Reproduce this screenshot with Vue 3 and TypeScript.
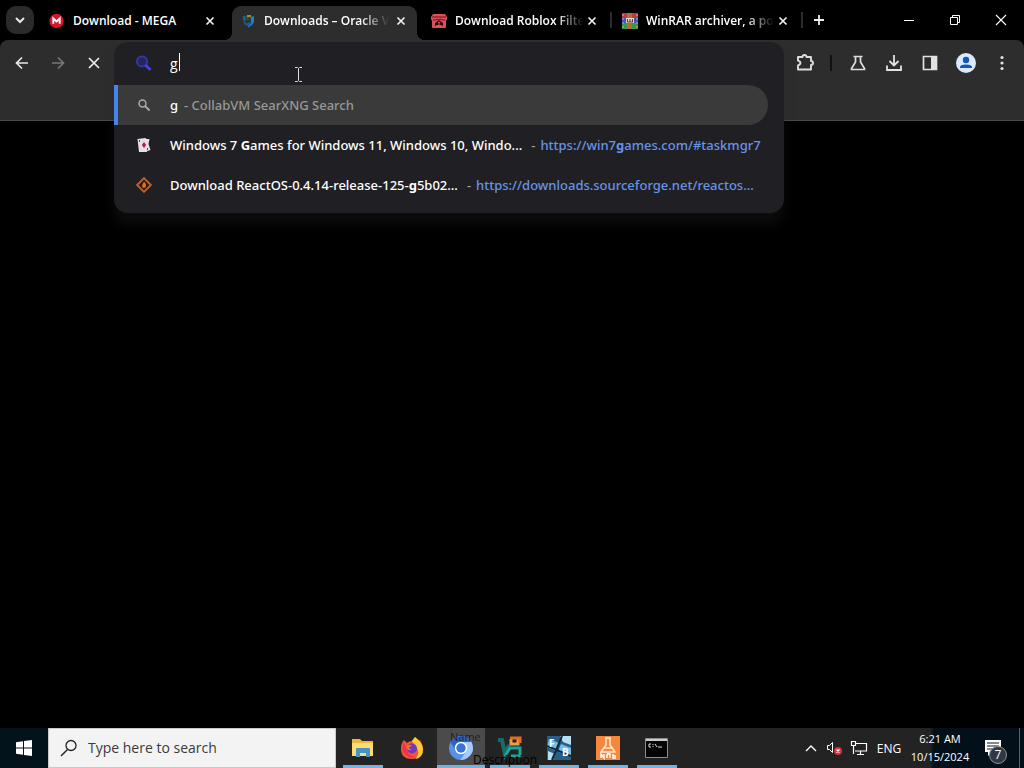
<script setup lang="ts">
import { ref } from 'vue'

interface Tab { id: string; title: string; active?: boolean }
interface Part { text: string; bold?: boolean }
interface Suggestion { icon: string; title: Part[]; url: Part[] }

const query = ref('g')
const search = ref('')

const tabs: Tab[] = [
  { id: 'mega', title: 'Download - MEGA' },
  { id: 'oracle', title: 'Downloads – Oracle V', active: true },
  { id: 'itch', title: 'Download Roblox Filte' },
  { id: 'winrar', title: 'WinRAR archiver, a po' }
]

const suggestions: Suggestion[] = [
  {
    icon: 'card',
    title: [{ text: 'Windows 7 ' }, { text: 'G', bold: true }, { text: 'ames for Windows 11, Windows 10, Windo...' }],
    url: [{ text: 'https://win7' }, { text: 'g', bold: true }, { text: 'ames.com/#taskmgr7' }]
  },
  {
    icon: 'forge',
    title: [{ text: 'Download ReactOS-0.4.14-release-125-' }, { text: 'g', bold: true }, { text: '5b02...' }],
    url: [{ text: 'https://downloads.sourceforge.net/reactos...' }]
  }
]

const apps = [
  { id: 'files', label: 'File Explorer', state: 'open' },
  { id: 'firefox', label: 'Firefox', state: '' },
  { id: 'chromium', label: 'Chromium', state: 'active' },
  { id: 'vb', label: 'VirtualBox', state: 'open' },
  { id: 'fb', label: 'Boot tool', state: 'open' },
  { id: 'lab', label: 'Lab', state: 'open' },
  { id: 'cmd', label: 'Command Prompt', state: 'open' }
]
</script>

<template>
  <div class="desktop">
    <header class="strip">
      <button class="tab-search" aria-label="Search tabs">
        <svg width="10" height="8" viewBox="0 0 10 8"><path d="M1 2l4 4 4-4" fill="none" stroke="#e8e8e8" stroke-width="2" /></svg>
      </button>
      <nav class="tabs">
        <div v-for="tab in tabs" :key="tab.id" class="tab" :class="[tab.id, { active: tab.active }]">
          <button class="tab-main">
            <svg v-if="tab.id === 'mega'" width="16" height="16" viewBox="0 0 16 16">
              <circle cx="7.500" cy="8" r="7.200" fill="#d9142a" />
              <path d="M4.300 10.800V5.500L7.500 8.500l3.200-3v5.300" fill="none" stroke="#fff" stroke-width="1.900" />
            </svg>
            <svg v-else-if="tab.id === 'oracle'" width="16" height="16" viewBox="0 0 16 16">
              <path d="M2.500 3.500l3-1v6l-2-1z" fill="#176c8c" />
              <path d="M6 3l3 1v4L6 7z" fill="#394b3d" />
              <path d="M7 2h4v2H7z" fill="#b18a2c" />
              <path d="M10.500 4l3.500-1v6l-2 3-4 2.500V13l3-3z" fill="#1684d1" />
              <path d="M3 8l4 2 3-1v3l-3 1-3-2z" fill="#1d5596" />
            </svg>
            <svg v-else-if="tab.id === 'itch'" width="16" height="16" viewBox="0 0 16 16">
              <path d="M2 1h12l2 3v2l-1 2v6q0 1-1 1H2q-1 0-1-1V8L0 6V4z" fill="#d9505a" />
              <path d="M1 4h14M2 7h3l1-1 2 1 2-1 1 1h3" stroke="#68141c" fill="none" />
              <path d="M4 13V10l4-3 4 3v3l-2-1H6z" fill="#35080c" />
              <path d="M8 8.500l1.500 1.500H8.500v2h-1v-2h-1z" fill="#d9505a" />
            </svg>
            <svg v-else width="16" height="16" viewBox="0 0 16 16">
              <path d="M0 0h16v5H0z" fill="#b73f43" />
              <path d="M0 5h16v5H0z" fill="#3b56bc" />
              <path d="M0 10h16v6H0z" fill="#35984b" />
              <path d="M1 1v14M15 1v14" stroke="#d9a0b4" stroke-dasharray="2 2" />
              <path d="M5 0h5v16H5z" fill="#ba6a35" />
              <path d="M4 5h8v5H4z" fill="#e8e3d0" />
              <path d="M5.500 6v3h5V6M8 6v3" stroke="#574626" fill="none" stroke-width="1.200" />
            </svg>
            <span class="tab-title">{{ tab.title }}</span>
          </button>
          <button class="tab-close" aria-label="Close tab">
            <svg width="10" height="10" viewBox="0 0 10 10"><path d="M1.500 1.500l7 7M8.500 1.500l-7 7" stroke="#f0f0f0" stroke-width="1.700" /></svg>
          </button>
        </div>
      </nav>
      <button class="new-tab" aria-label="New tab">
        <svg width="12" height="12" viewBox="0 0 12 12"><path d="M6 1v10M1 6h10" stroke="#eee" stroke-width="1.800" /></svg>
      </button>
      <div class="window-controls">
        <button aria-label="Minimize"><svg width="12" height="12" viewBox="0 0 12 12"><path d="M1 6.500h10" stroke="#fff" /></svg></button>
        <button aria-label="Restore"><svg width="12" height="12" viewBox="0 0 12 12"><path d="M1.500 3.500h7v7h-7zM3.500 3.500v-2h7v7h-2" fill="none" stroke="#fff" /></svg></button>
        <button aria-label="Close"><svg width="12" height="12" viewBox="0 0 12 12"><path d="M1 1l10 10M11 1L1 11" stroke="#fff" stroke-width="1.100" /></svg></button>
      </div>
    </header>

    <section class="toolbar">
      <button class="tool" aria-label="Back"><svg width="16" height="16" viewBox="0 0 16 16"><path d="M14 8H3M8 2.500L2.500 8 8 13.500" fill="none" stroke="#e8e8e8" stroke-width="1.700" /></svg></button>
      <button class="tool" aria-label="Forward"><svg width="16" height="16" viewBox="0 0 16 16"><path d="M2 8h11M8 2.500L13.500 8 8 13.500" fill="none" stroke="#777" stroke-width="1.700" /></svg></button>
      <button class="tool" aria-label="Stop"><svg width="16" height="16" viewBox="0 0 16 16"><path d="M3 3l10 10M13 3L3 13" stroke="#eee" stroke-width="1.700" /></svg></button>

      <div class="omnibox">
        <div class="popup">
          <label class="address">
            <svg class="lens" width="18" height="18" viewBox="0 0 18 18"><circle cx="8" cy="6.500" r="5" fill="#252653" stroke="#3434b0" stroke-width="2" /><path d="M11.500 10l5 5" stroke="#4040dc" stroke-width="3" /></svg>
            <input v-model="query" type="text" aria-label="Address and search bar" spellcheck="false" />
            <span class="caret"></span>
          </label>
          <ul class="results">
            <li class="selected">
              <svg class="lens" width="14" height="14" viewBox="0 0 14 14"><circle cx="5.500" cy="5.500" r="3.500" fill="none" stroke="#aaa" stroke-width="1.500" /><path d="M8 8l4.500 4.500" stroke="#aaa" stroke-width="1.800" /></svg>
              <span class="name">g</span>
              <span class="engine">- CollabVM SearXNG Search</span>
            </li>
            <li v-for="s in suggestions" :key="s.icon">
              <svg v-if="s.icon === 'card'" class="lens" width="16" height="16" viewBox="0 0 16 16">
                <path d="M1.500 2l8-1 1 1h3l-1 5 2 6-3 1-1 1H3z" fill="#e8dfe4" />
                <path d="M8 5l2.200 3L8 11 5.800 8z" fill="#b31d4e" />
                <path d="M3 3h1v2H3zM11 11h1v2h-1z" fill="#6b3350" />
              </svg>
              <svg v-else class="lens" width="16" height="16" viewBox="0 0 16 16">
                <path d="M8 1.200L14.800 8 8 14.800 1.200 8z" fill="#33180b" stroke="#b8632a" stroke-width="1.900" />
                <path d="M8 4.500q2.500 2.500 2 4.500-.5 2-2 2t-2-2q0-1 2-4.500z" fill="#d9732b" />
              </svg>
              <span class="name"><span v-for="(p, i) in s.title" :key="i" :class="{ bold: p.bold }">{{ p.text }}</span></span>
              <span class="dash">-</span>
              <a class="url" href="#"><span v-for="(p, i) in s.url" :key="i" :class="{ bold: p.bold }">{{ p.text }}</span></a>
            </li>
          </ul>
        </div>
      </div>

      <button class="tool" aria-label="Extensions"><svg width="20" height="20" viewBox="0 0 20 20"><path d="M3 4h4.500q0-2 2-2t2 2H16v4q2 0 2 2t-2 2v4.500H3v-4.200q2.400-.6 2.400-2.300T3 7.700z" fill="none" stroke="#ddd" stroke-width="1.900" stroke-linejoin="round" /></svg></button>
      <span class="rule"></span>
      <button class="tool" aria-label="Labs"><svg width="18" height="18" viewBox="0 0 18 18"><path d="M4.500 2.500h9M6.500 3v5L2.500 14.500v1h13v-1L11.500 8V3" fill="none" stroke="#ddd" stroke-width="1.700" /></svg></button>
      <button class="tool" aria-label="Downloads"><svg width="18" height="18" viewBox="0 0 18 18"><path d="M9 1v10.500M4.500 7L9 11.500 13.500 7M2 11.500v4.500h14v-4.500" fill="none" stroke="#e2e2e2" stroke-width="1.800" /></svg></button>
      <button class="tool" aria-label="Side panel"><svg width="16" height="16" viewBox="0 0 16 16"><path d="M1.500 1.500h13v13h-13z" fill="none" stroke="#e2e2e2" stroke-width="1.700" /><path d="M9 1.500h5.500v13H9z" fill="#e2e2e2" /></svg></button>
      <button class="tool" aria-label="Profile"><svg width="20" height="20" viewBox="0 0 20 20"><circle cx="10" cy="10" r="10" fill="#dce8fb" /><circle cx="10" cy="7" r="3.200" fill="#1554b8" /><path d="M4 15v-1q0-2.500 6-2.500t6 2.500v1z" fill="#1554b8" /></svg></button>
      <button class="tool" aria-label="Menu"><svg width="4" height="16" viewBox="0 0 4 16"><g fill="#e2e2e2"><circle cx="2" cy="2.500" r="1.600" /><circle cx="2" cy="8" r="1.600" /><circle cx="2" cy="13.500" r="1.600" /></g></svg></button>
    </section>

    <main class="page"></main>

    <footer class="taskbar">
      <button class="start" aria-label="Start">
        <svg width="16" height="16" viewBox="0 0 16 16"><path d="M0 2.300L7 1.300v6.200H0zM8 1.100L16 0v7.500H8zM0 8.500h7v6.200l-7-1zM8 8.500h8V16l-8-1.100z" fill="#fff" /></svg>
      </button>
      <label class="search">
        <svg width="18" height="18" viewBox="0 0 18 18"><circle cx="11" cy="6.500" r="5" fill="none" stroke="#222" stroke-width="1.300" /><path d="M7.500 10.500L1 17" stroke="#222" stroke-width="1.400" /></svg>
        <input v-model="search" type="text" placeholder="Type here to search" aria-label="Type here to search" />
      </label>
      <nav class="apps">
        <button v-for="app in apps" :key="app.id" class="app" :class="app.state" :aria-label="app.label">
          <svg v-if="app.id === 'files'" width="24" height="24" viewBox="0 0 24 24">
            <path d="M1 3h8l2 2h11v15H1z" fill="#e9b83c" /><path d="M1 7h21v13H1z" fill="#fbdc73" />
            <path d="M5 21v-8q0-1 1-1h12q1 0 1 1v8h-4v-4H9v4z" fill="#4693c8" />
          </svg>
          <svg v-else-if="app.id === 'firefox'" width="24" height="24" viewBox="0 0 24 24">
            <path d="M4 4l3 3q2-2 5-2l3-4q2 2 3 4l2-1q3 5 3 9 0 10-11 10T1 13Q1 7 4 4z" fill="#f4562f" />
            <path d="M12 5l3-4q7 5 8 12 0 8-7 10 5-8-1-13z" fill="#ffca36" />
            <path d="M4 6q-4 9 2 13 4 4 10 2-8-1-9-7z" fill="#ee3058" />
            <circle cx="12" cy="12.500" r="5" fill="#7539b8" /><path d="M7 10q4-2 5 0l-3 1q0 3 3 2-4 3-5-1z" fill="#f37932" />
          </svg>
          <svg v-else-if="app.id === 'chromium'" width="24" height="24" viewBox="0 0 24 24">
            <circle cx="12" cy="12" r="12" fill="#5792e8" />
            <path d="M1.600 6Q5 0 12 0t10.400 6H12L7 15z" fill="#2d62bd" />
            <path d="M22.400 6q4 9-2 14-4 4-9 4l6-9-2-9z" fill="#a7cbf8" />
            <circle cx="12" cy="12" r="6.200" fill="#fff" /><circle cx="12" cy="12" r="4.700" fill="#3474dc" />
          </svg>
          <svg v-else-if="app.id === 'vb'" width="26" height="24" viewBox="0 0 26 24">
            <path d="M1 4h4l3 14 4-9" fill="none" stroke="#176c6b" stroke-width="4" />
            <path d="M14 3v5h7V3" fill="none" stroke="#e4a044" stroke-width="3" /><path d="M13 2h10v5" fill="none" stroke="#e66a22" stroke-width="3" />
            <path d="M8 20l5-8h10v8h-9" fill="none" stroke="#20a49a" stroke-width="3" />
          </svg>
          <svg v-else-if="app.id === 'fb'" width="24" height="24" viewBox="0 0 24 24">
            <path d="M0 0h24v24H0z" fill="#275f86" /><path d="M2 3l10 4-4 8-8-4zM14 8l10 4v7l-13-3z" fill="#78bfe6" /><path d="M13 0h11v9l-8-3zM1 15l7 3-2 6H1z" fill="#b4dff5" />
            <path d="M15 0L5 24M0 10l24 10" stroke="#10283c" stroke-width="2" />
            <text x="2" y="11" font-size="10" font-weight="700" fill="#fff">F</text><text x="15" y="20" font-size="10" font-weight="700" fill="#fff">B</text>
          </svg>
          <svg v-else-if="app.id === 'lab'" width="24" height="24" viewBox="0 0 24 24">
            <path d="M0 0h24v24H0z" fill="#f5883c" />
            <path d="M9 2h6M10 2v7L5 16h14L14 9V2M8 12h8" fill="none" stroke="#ffe9d2" stroke-width="1.500" />
            <path d="M5 22v-4l3 4v-4M11 18v4M11 18h3v4M17 18v4h3M17 20h3" fill="none" stroke="#fff" stroke-width="1.400" />
          </svg>
          <svg v-else width="24" height="20" viewBox="0 0 24 20">
            <path d="M.5.5h22v19H.5z" fill="#050505" stroke="#8d8d8d" /><path d="M1 1h21v2H1z" fill="#c9cccc" />
            <path d="M6 6H4v3h2M8 6v1M8 8v1M10 6l2 3M13 9h4" fill="none" stroke="#ddd" />
          </svg>
        </button>
        <span class="ghost top">Name</span>
        <span class="ghost bottom">Description</span>
      </nav>
      <div class="tray">
        <button class="t-chevron" aria-label="Show hidden icons"><svg width="12" height="8" viewBox="0 0 12 8"><path d="M1 7l5-5 5 5" fill="none" stroke="#fff" stroke-width="1.400" /></svg></button>
        <button class="t-sound" aria-label="Volume muted"><svg width="18" height="16" viewBox="0 0 18 16"><path d="M2.500 5.500h2l3-3v10l-3-3h-2z" fill="none" stroke="#fff" /><circle cx="13" cy="11" r="4" fill="#d8313a" /><path d="M11.500 9.500l3 3M14.500 9.500l-3 3" stroke="#fff" stroke-width="1.200" /></svg></button>
        <button class="t-net" aria-label="Network"><svg width="18" height="16" viewBox="0 0 18 16"><path d="M6 3.500h10.500v7.500H5M10.500 11v3M7 14.500h7M1.500 1.500h4v4h-4zM3.500 6v8" fill="none" stroke="#fff" stroke-width="1.200" /></svg></button>
        <button class="lang">ENG</button>
        <button class="clock"><span>6:21 AM</span><span>10/15/2024</span></button>
        <button class="notes" aria-label="7 notifications">
          <svg width="18" height="18" viewBox="0 0 18 18"><path d="M1 1h16v12H8l-4 4v-4H1z" fill="#fff" /><path d="M3 4h12M3 7h12M3 10h8" stroke="#10161c" stroke-width="1.200" /></svg>
          <span class="badge">7</span>
        </button>
        <button class="peek" aria-label="Show desktop"></button>
      </div>
    </footer>

    <svg class="pointer" width="9" height="17" viewBox="0 0 9 17"><path d="M1 1.500h2.500l1 1 1-1H8M4.500 2.500v12M1 15.500h2.500l1-1 1 1H8" fill="none" stroke="#ddd" /></svg>
  </div>
</template>

<style>
html, body { margin: 0; background: #000; }
</style>

<style scoped>
* { box-sizing: border-box; }
.desktop { position: relative; display: flex; flex-direction: column; min-height: 100vh; background: #000; color: #fff; font-family: "Open Sans", "Noto Sans", sans-serif; font-size: 13px; overflow: hidden; }
button { display: flex; align-items: center; justify-content: center; margin: 0; padding: 0; border: 0; background: none; color: inherit; font: inherit; }
input { border: 0; outline: 0; padding: 0; background: none; font: inherit; color: inherit; min-width: 0; }
svg { flex: none; display: block; }

.strip { display: flex; align-items: center; height: 40px; padding-left: 6px; background: #000; }
.tab-search { width: 28px; height: 28px; border-radius: 10px; background: #2b2b2b; }
.tabs { display: flex; align-self: flex-end; gap: 6px; margin-left: 7px; }
.tab { position: relative; display: flex; align-items: center; width: 185px; height: 34px; padding: 0 6px 0 8px; border-radius: 9px 9px 0 0; }
.tab.active { background: #2d2d2d; }
.tab.active::before, .tab.active::after { content: ""; position: absolute; bottom: 0; width: 8px; height: 8px; }
.tab.active::before { right: 100%; background: radial-gradient(circle at 0 0, transparent 8px, #2d2d2d 8px); }
.tab.active::after { left: 100%; background: radial-gradient(circle at 100% 0, transparent 8px, #2d2d2d 8px); }
.tab.itch::after, .tab.winrar::after { content: ""; position: absolute; left: 187px; top: 6px; width: 2px; height: 16px; background: #2c2c2e; }
.tab-main, .tab-close { margin-bottom: 5px; }
.tab-main { flex: 1; min-width: 0; gap: 8px; justify-content: flex-start; }
.tab-title { flex: none; white-space: nowrap; text-align: left; font-size: 12px; line-height: 20px; font-weight: 600; }
.oracle .tab-title, .itch .tab-title, .winrar .tab-title { mask-image: linear-gradient(90deg, #000 calc(100% - 28px), transparent); }
.tab-close { width: 20px; height: 20px; margin-left: auto; }
.new-tab { width: 28px; height: 28px; margin-left: 6px; }
.window-controls { display: flex; margin-left: auto; }
.window-controls button { width: 46px; height: 40px; }

.toolbar { display: flex; align-items: flex-start; height: 81px; padding: 5px 4px 0; background: #2d2d2d; border-bottom: 1px solid #4a4a4a; border-radius: 8px 8px 0 0; }
.tool { width: 36px; height: 36px; }
.rule { width: 2px; height: 16px; margin: 10px 8px 0 7px; background: #111; }
.omnibox { position: relative; flex: 1; height: 36px; margin: 0 3px 0 2px; }
.popup { position: absolute; z-index: 2; left: 0; right: 0; top: -3px; padding-bottom: 8px; border-radius: 14px; background: #202024; box-shadow: 0 12px 12px rgba(40, 40, 40, 0.3); }
.address { position: relative; display: flex; align-items: center; height: 43px; }
.address .lens { margin-left: 20px; margin-right: 18px; }
.address input { flex: 1; font-size: 14px; line-height: 20px; caret-color: transparent; }
.caret { position: absolute; left: 65px; top: 11px; width: 1px; height: 18px; background: #fff; }
.results { margin: 0; padding: 0; list-style: none; font-family: "Noto Sans", "Open Sans", sans-serif; font-weight: 500; line-height: 20px; white-space: nowrap; }
.results li { display: flex; align-items: center; height: 40px; margin-right: 16px; padding-left: 22px; }
.results li .lens { margin-right: 18px; }
.results .selected { padding-left: 19px; background: #3a3a3a; border-left: 4px solid #4584ee; border-radius: 0 20px 20px 0; }
.results .selected .lens { margin-right: 19px; }
.results .name { flex: none; }
.engine { margin-left: 6px; color: #989898; }
.dash { margin: 0 5px 0 9px; color: #a0a0a0; }
.url { color: #6793e8; text-decoration: none; }
.bold { font-weight: 700; }

.page { flex: 1; background: #000; }

.taskbar { display: flex; height: 40px; background: #232323; }
.start { width: 48px; background: #02131c; }
.search { display: flex; align-items: center; width: 288px; gap: 10px; padding-left: 11px; background: #f3f3f3; border: 1px solid #c9c9c9; color: #333; }
.search input { flex: 1; font-size: 14px; line-height: 20px; }
.search input::placeholder { color: #3a3a3a; opacity: 1; }
.apps { position: relative; display: flex; gap: 1px; margin-left: 3px; }
.app { position: relative; width: 48px; }
.app.active { background: #4b4b4b; }
.app.open::after, .app.active::after { content: ""; position: absolute; bottom: 0; left: 4px; right: 4px; height: 3px; background: #74b2e2; }
.app.active::after { left: 0; right: 0; }
.ghost { position: absolute; font-size: 11px; line-height: 16px; color: #000; }
.ghost.top { left: 111px; top: 1px; opacity: 0.6; }
.ghost.bottom { left: 134px; bottom: 0; font-size: 12px; }
.tray { display: flex; align-items: stretch; margin-left: auto; background: linear-gradient(90deg, #232323 0, #232323 130px, #03101a 134px); }
.t-chevron { width: 22px; }
.t-sound { width: 24px; }
.t-net { width: 26px; }
.lang { width: 34px; font-size: 12px; }
.clock { flex-direction: column; width: 68px; font-size: 11px; line-height: 18px; }
.notes { position: relative; width: 45px; padding-right: 8px; }
.badge { position: absolute; right: 12px; bottom: 4px; width: 18px; height: 18px; border-radius: 50%; border: 1px solid #8a9096; background: #303941; font-size: 12px; line-height: 16px; text-align: center; }
.peek { width: 5px; border-left: 1px solid #56636c; }
.pointer { position: absolute; z-index: 3; left: 294px; top: 66px; }
</style>
